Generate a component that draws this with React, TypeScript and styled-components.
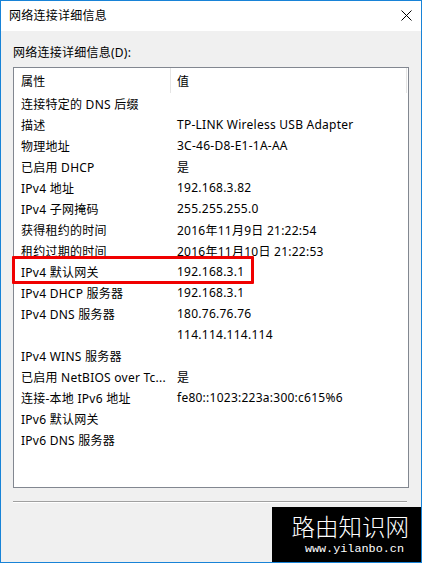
import styled, { createGlobalStyle } from "styled-components";

const GlobalStyle = createGlobalStyle`
  html, body {
    margin: 0;
    padding: 0;
    background: #ffffff;
  }
  * {
    box-sizing: border-box;
  }
`;

type Item = { name: string; value: string; marked?: boolean };

const items: Item[] = [
  { name: "连接特定的 DNS 后缀", value: "" },
  { name: "描述", value: "TP-LINK Wireless USB Adapter" },
  { name: "物理地址", value: "3C-46-D8-E1-1A-AA" },
  { name: "已启用 DHCP", value: "是" },
  { name: "IPv4 地址", value: "192.168.3.82" },
  { name: "IPv4 子网掩码", value: "255.255.255.0" },
  { name: "获得租约的时间", value: "2016年11月9日 21:22:54" },
  { name: "租约过期的时间", value: "2016年11月10日 21:22:53" },
  { name: "IPv4 默认网关", value: "192.168.3.1", marked: true },
  { name: "IPv4 DHCP 服务器", value: "192.168.3.1" },
  { name: "IPv4 DNS 服务器", value: "180.76.76.76" },
  { name: "", value: "114.114.114.114" },
  { name: "IPv4 WINS 服务器", value: "" },
  { name: "已启用 NetBIOS over Tc...", value: "是" },
  { name: "连接-本地 IPv6 地址", value: "fe80::1023:223a:300:c615%6" },
  { name: "IPv6 默认网关", value: "" },
  { name: "IPv6 DNS 服务器", value: "" },
];

const App = () => {
  return (
    <>
      <GlobalStyle />
      <Window>
        <TitleBar>
          <Title>网络连接详细信息</Title>
          <CloseButton>
            <svg width="11" height="11" viewBox="0 0 11 11">
              <path d="M0.5 0.5 L10.5 10.5 M10.5 0.5 L0.5 10.5" stroke="#000" strokeWidth="1" />
            </svg>
          </CloseButton>
        </TitleBar>
        <Body>
          <Label>网络连接详细信息(D):</Label>
          <ListView>
            <HeaderRow>
              <HeaderCell>属性</HeaderCell>
              <HeaderCell>值</HeaderCell>
              <HeaderRest />
            </HeaderRow>
            {items.map((item, i) => (
              <Row key={i}>
                <NameCell>{item.name}</NameCell>
                <ValueCell>{item.value}</ValueCell>
                {item.marked && <Highlight />}
              </Row>
            ))}
          </ListView>
          <Divider />
        </Body>
        <Watermark>
          <Brand>路由知识网</Brand>
          <Site>www.yilanbo.cn</Site>
        </Watermark>
      </Window>
    </>
  );
};
export default App;

const Window = styled.div`
  position: relative;
  width: 422px;
  height: 563px;
  border: 1px solid #1883d7;
  display: flex;
  flex-direction: column;
  font-family: "Noto Sans", "Noto Sans CJK SC", sans-serif;
  font-size: 12px;
  letter-spacing: 0.25px;
  color: #000;
  overflow: hidden;
`;

const TitleBar = styled.div`
  height: 30px;
  background: #ffffff;
  display: flex;
  align-items: center;
  justify-content: space-between;
  padding: 0 9px 0 8px;
`;

const Title = styled.div`
  line-height: 16px;
`;

const CloseButton = styled.div`
  width: 11px;
  height: 11px;
  display: flex;
  margin-bottom: 1px;
`;

const Body = styled.div`
  flex: 1;
  background: #f0f0f0;
  padding: 14px 12px 0 12px;
  display: flex;
  flex-direction: column;
`;

const Label = styled.div`
  line-height: 16px;
  margin-bottom: 6px;
`;

const ListView = styled.div`
  width: 396px;
  height: 421px;
  background: #ffffff;
  border: 1px solid #828790;
  display: flex;
  flex-direction: column;
`;

const HeaderRow = styled.div`
  height: 25px;
  display: grid;
  grid-template-columns: 157px 236px 1fr;
  align-items: stretch;
`;

const HeaderCell = styled.div`
  display: flex;
  align-items: center;
  padding-left: 7px;
  border-right: 1px solid #e5e5e5;

  &:nth-child(2) {
    padding-left: 6px;
  }
`;

const HeaderRest = styled.div``;

const Row = styled.div`
  position: relative;
  height: 21px;
  display: grid;
  grid-template-columns: 157px 1fr;
  align-items: center;
  white-space: nowrap;
`;

const NameCell = styled.div`
  padding-left: 7px;
  overflow: hidden;
`;

const ValueCell = styled.div`
  padding-left: 6px;
`;

/* red frame drawn over the gateway row */
const Highlight = styled.div`
  position: absolute;
  left: -2px;
  top: -5px;
  width: 242px;
  height: 28px;
  border: 3px solid #f00000;
  border-radius: 1px;
  pointer-events: none;
`;

const Divider = styled.div`
  width: 394px;
  height: 2px;
  margin-top: 13px;
  border-top: 1px solid #a0a0a0;
  border-bottom: 1px solid #ffffff;
`;

const Watermark = styled.div`
  position: absolute;
  right: -1px;
  bottom: -1px;
  width: 150px;
  height: 56px;
  background: #000;
  color: #fff;
  display: flex;
  flex-direction: column;
  align-items: flex-end;
  padding: 6px 13px 0 0;
  letter-spacing: 0;
`;

const Brand = styled.div`
  font-family: "Noto Sans CJK SC", sans-serif;
  font-weight: 300;
  font-size: 23.5px;
  line-height: 26px;
`;

const Site = styled.div`
  font-family: "Liberation Mono", "DejaVu Sans Mono", monospace;
  font-size: 11.8px;
  line-height: 16px;
  margin-top: 2px;
  margin-right: 5px;
`;
